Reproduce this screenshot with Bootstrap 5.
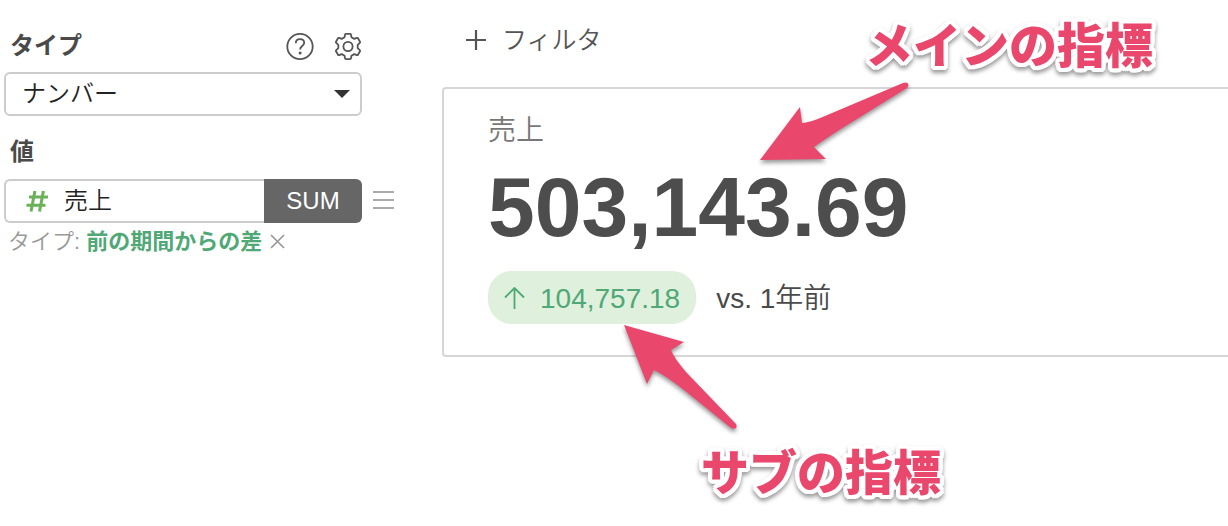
<!DOCTYPE html>
<html lang="ja">
<head>
<meta charset="utf-8">
<meta name="viewport" content="width=device-width, initial-scale=1">
<title>ナンバー</title>
<link href="https://cdn.jsdelivr.net/npm/bootstrap@5.3.0/dist/css/bootstrap.min.css" rel="stylesheet">
<style>
  body { font-family: "Liberation Sans", "Noto Sans CJK JP", sans-serif; color: #4a4a4a; background: #fff; overflow-x: hidden; }
  .sidebar { flex: 0 0 442px; padding: 20px 44px 0 4px; }
  .field-grid { display: grid; grid-template-columns: 358px 28px; column-gap: 8px; align-items: center; }
  .field-label { font-size: 24px; line-height: 36px; font-weight: 700; margin-left: 6px; }
  .label-row { height: 52px; }
  .value-label { height: 63px; padding-top: 18px; }
  .icon-btn { padding: 0; border: 0; line-height: 0; color: #555; background: none; }
  .head-icons { margin-right: -2px; }
  .type-select { height: 44px; border: 2px solid #ccc; border-radius: 6px; padding: 0 40px 0 16px; font-size: 24px; line-height: 40px; font-weight: 350; color: #222;
    background-image: url("data:image/svg+xml,%3Csvg xmlns='http://www.w3.org/2000/svg' viewBox='0 0 16 8'%3E%3Cpath d='M0 0h16L8 8z' fill='%23333'/%3E%3C/svg%3E"); background-size: 16px 8px; background-position: right 10px center; }
  .value-box { height: 44px; border: 2px solid #ccc; border-right: 0; border-radius: 6px 0 0 6px; font-size: 24px; font-weight: 350; color: #222; padding-left: 20px; gap: 16px; }
  .sum-btn { width: 98px; height: 44px; padding: 0; border: 0; border-radius: 0 6px 6px 0; background: #666; color: #fff; font-size: 24px; line-height: 44px; }
  .type-note { font-size: 22px; line-height: 32px; margin: 3px 0 0 4px; color: #999; font-weight: 350; gap: 6px; }
  .green { color: #4fa876; font-weight: 700; text-decoration: none; }
  .main-pane { min-width: 0; padding-top: 20px; }
  .filter-btn { padding: 0; border: 0; height: 40px; margin: 0 0 27px 23px; font-size: 25px; line-height: 40px; font-weight: 350; color: #555; gap: 15px; }
  .number-card { border: 2px solid #d6d6d6; border-right: 0; border-radius: 4px 0 0 4px; padding: 20px 44px 31px; }
  .metric-name { font-size: 28px; line-height: 44px; font-weight: 350; color: #777; }
  .metric-value { font-size: 84px; line-height: 96px; font-weight: 700; color: #4d4d4d; margin: 6px 0 16px; }
  .delta { height: 53px; border-radius: 24px; background: #dff0dc; color: #4fa876; font-size: 28px; line-height: 32px; padding: 2px 16px 0 16px; gap: 15px; font-weight: 400; }
  .versus { font-size: 28px; line-height: 44px; font-weight: 350; padding-top: 2px; margin-left: 20px; }
  .note-text { position: absolute; white-space: nowrap; font-size: 48px; line-height: 60px; font-weight: 900; color: #ea476d; z-index: 2;
    text-shadow: 4px 0 #fff, -4px 0 #fff, 0 4px #fff, 0 -4px #fff, 3px 3px #fff, -3px 3px #fff, 3px -3px #fff, -3px -3px #fff, 4px 2px #fff, -4px 2px #fff, 4px -2px #fff, -4px -2px #fff, 2px 4px #fff, -2px 4px #fff, 2px -4px #fff, -2px -4px #fff, 2px 2px #fff, -2px -2px #fff, 2px -2px #fff, -2px 2px #fff;
    filter: drop-shadow(0 3px 2px rgba(0,0,0,.4)); }
  .note-arrow { position: absolute; overflow: visible; fill: #ea476d; filter: drop-shadow(0 3px 2px rgba(0,0,0,.4)); z-index: 2; pointer-events: none; }
  .main-note { left: 421px; top: -72px; }
  .main-arrow { left: 314px; top: -8px; }
  .sub-note { left: 257px; top: 355px; }
  .sub-arrow { left: 178px; top: 234px; }
</style>
</head>
<body class="min-vh-100">
<div class="d-flex">
  <aside class="sidebar">
    <div class="field-grid">
      <div class="label-row d-flex align-items-center justify-content-between">
        <label class="field-label" for="chartType">タイプ</label>
        <div class="head-icons d-flex gap-3">
          <button type="button" class="icon-btn" aria-label="ヘルプ"><svg width="32" height="32" viewBox="0 0 32 32" fill="none" stroke="currentColor" stroke-width="1.8"><circle cx="16" cy="16.500" r="12.700"/><path d="M11.800 13.200c0-2.600 1.700-4 4.200-4s4.200 1.400 4.200 3.600c0 3.200-4.100 3.300-4.100 6.600"/><circle cx="16.100" cy="23" r="1.500" fill="currentColor" stroke="none"/></svg></button>
          <button type="button" class="icon-btn" aria-label="設定"><svg width="32" height="32" viewBox="0 0 32 32" fill="none" stroke="currentColor" stroke-width="1.8" stroke-linejoin="round"><circle cx="16" cy="16.500" r="4.600"/><path d="M14 3.800h4q.8 0 1 .8l.4 2.600 2.900 1.700 2.500-1q.8-.3 1.200.4l2 3.400q.4.700-.2 1.200l-2.100 1.900v3.400l2.100 1.900q.6.500.2 1.200l-2 3.400q-.4.700-1.200.4l-2.500-1-2.900 1.700-.4 2.600q-.2.800-1 .8h-4q-.8 0-1-.8l-.4-2.600-2.900-1.700-2.500 1q-.8.300-1.200-.4l-2-3.400q-.4-.7.2-1.200l2.100-1.900v-3.400l-2.100-1.900q-.6-.5-.2-1.200l2-3.400q.4-.7 1.200-.4l2.500 1 2.900-1.700.4-2.600q.2-.8 1-.8z"/></svg></button>
        </div>
      </div>
      <span></span>
      <select id="chartType" class="form-select type-select"><option>ナンバー</option></select>
      <span></span>
      <div class="field-label value-label">値</div>
      <span></span>
      <div class="d-flex">
        <div class="value-box d-flex align-items-center flex-grow-1">
          <svg width="22" height="22" viewBox="0 0 22 22" fill="none" stroke="#6ab158" stroke-width="3"><path d="M8.900 1 5 21.500M17.400 1l-3.900 20.500M3 7h19M.5 15.200h19"/></svg>
          <span>売上</span>
        </div>
        <button type="button" class="sum-btn">SUM</button>
      </div>
      <button type="button" class="icon-btn text-start" aria-label="メニュー"><svg width="24" height="20" viewBox="0 0 24 20" stroke="#aaa" stroke-width="2"><path d="M3 1h21M3 9h21M3 17h21"/></svg></button>
    </div>
    <div class="type-note d-flex align-items-center">
      <span>タイプ:</span>
      <a href="#" class="green">前の期間からの差</a>
      <button type="button" class="icon-btn" aria-label="削除"><svg width="18" height="18" viewBox="0 0 18 18" stroke="#999" stroke-width="1.7"><path d="m3 2 13 13M16 2 3 15"/></svg></button>
    </div>
  </aside>

  <main class="main-pane flex-grow-1">
    <button type="button" class="filter-btn btn d-flex align-items-center"><svg width="22" height="22" viewBox="0 0 22 22" stroke="#555" stroke-width="2.200"><path d="M1 11h20M11 1v20"/></svg><span>フィルタ</span></button>
    <section class="number-card position-relative">
      <div class="metric-name">売上</div>
      <div class="metric-value">503,143.69</div>
      <div class="d-flex align-items-center">
        <div class="delta d-flex align-items-center"><svg width="21" height="24" viewBox="0 0 21 24" fill="none" stroke="currentColor" stroke-width="1.8"><path d="M10.500 22V1M1 10.500 10.500 1l9.500 9.500"/></svg><span>104,757.18</span></div>
        <div class="versus">vs. 1年前</div>
      </div>
      <div class="note-text main-note">メインの指標</div>
      <svg class="note-arrow main-arrow" width="154" height="82" viewBox="0 0 154 82"><path d="M2 79 42 26 44 42Q51 42 67 35L145 2C150 0 152 4 149 7L86 46Q67 58 56 66L68 78Z"/></svg>
      <div class="note-text sub-note">サブの指標</div>
      <svg class="note-arrow sub-arrow" width="116" height="106" viewBox="0 0 116 106"><path d="M2 2 62 19 49 27Q52 35 64 49L114 101C116 105 113 107 109 105L62 67Q44 53 32 47L25 61Z"/></svg>
    </section>
  </main>
</div>
<script src="https://cdn.jsdelivr.net/npm/bootstrap@5.3.0/dist/js/bootstrap.bundle.min.js"></script>
</body>
</html>
